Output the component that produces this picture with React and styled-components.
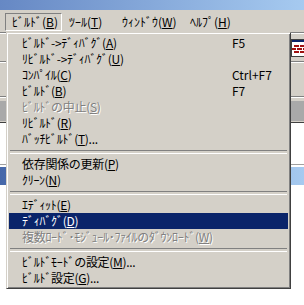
import React from "react";
import styled, { createGlobalStyle, css } from "styled-components";

const Global = createGlobalStyle`
  html, body { margin: 0; padding: 0; background: #fff; }
  * { box-sizing: border-box; }
`;

const FONT = `"Noto Sans CJK JP", "Noto Sans", sans-serif`;

const Screen = styled.div`
  position: relative;
  width: 304px;
  height: 305px;
  overflow: hidden;
  background: #fff;
  font-family: ${FONT};
  font-size: 12px;
  color: #000;
`;

const TitleStrip = styled.div`
  height: 10px;
  background: linear-gradient(90deg, #6688c4 0%, #a6caf0 100%);
`;

const MenuBar = styled.div`
  height: 22px;
  background: #d4d0c8;
  display: flex;
  align-items: flex-start;
  padding: 3px 0 0 5px;
`;

const MenuBarItem = styled.div`
  width: ${(p) => p.$w}px;
  height: 18px;
  padding-left: 6px;
  line-height: 16px;
  white-space: nowrap;
  border: 1px solid transparent;
  ${(p) =>
    p.$pressed &&
    css`
      border-color: #808080 #fff #fff #808080;
    `}
`;

const ToolbarArea = styled.div`
  background: #d4d0c8;
  display: flex;
  flex-direction: column;
`;

const ToolbarRow = styled.div`
  height: ${(p) => p.$h}px;
  display: flex;
  align-items: center;
  justify-content: flex-end;
  border-top: 1px solid #808080;
  box-shadow: inset 0 1px 0 #fff;
`;

const DarkBand = styled.div`
  height: 20px;
  margin-top: 3px;
  width: 100%;
  background: #a9a9a9;
`;

const Workspace = styled.div`
  background: #fff;
  border-top: 1px solid #404040;
  padding-top: 41px;
  height: 200px;
`;

const ChildWindow = styled.div`
  border-top: 1px solid #a0a0a0;
  padding-top: 2px;
`;

const ChildTitle = styled.div`
  height: 18px;
  background: linear-gradient(90deg, #4668aa 0%, #a6caf0 100%);
`;

const Dropdown = styled.div`
  position: absolute;
  left: 6px;
  top: 32px;
  width: 285px;
  background: #d4d0c8;
  border: 1px solid;
  border-color: #d4d0c8 #404040 #404040 #d4d0c8;
  box-shadow: inset 1px 1px 0 #fff, inset -1px -1px 0 #808080;
  padding: 2px;
  display: flex;
  flex-direction: column;
`;

const Item = styled.div`
  height: 16px;
  display: grid;
  grid-template-columns: 210px 1fr;
  padding-left: 13px;
  line-height: 15px;
  white-space: nowrap;
  color: #000;
  ${(p) =>
    p.$active &&
    css`
      background: #0a246a;
      color: #fff;
    `}
  ${(p) =>
    p.$disabled &&
    css`
      color: #808080;
      text-shadow: 1px 1px 0 #fff;
    `}
`;

const Label = styled.span`
  letter-spacing: -0.3px;
`;

const Shortcut = styled.span``;

const Separator = styled.div`
  height: 9px;
  display: flex;
  align-items: center;
  padding: 0 1px;
  &::before {
    content: "";
    flex: 1;
    height: 2px;
    border-top: 1px solid #808080;
    border-bottom: 1px solid #fff;
  }
`;

const BrickIcon = () => (
  <svg width="14" height="20" viewBox="0 0 14 20" style={{ marginRight: -1 }}>
    <rect x="0.5" y="2.5" width="14" height="17" fill="#fff" stroke="#404040" />
    <rect x="1" y="3" width="13" height="2" fill="#0a246a" />
    <g fill="#a01010">
      <rect x="3" y="8" width="5" height="2" />
      <rect x="9" y="8" width="5" height="2" />
      <rect x="1" y="11" width="4" height="2" />
      <rect x="6" y="11" width="5" height="2" />
      <rect x="12" y="11" width="2" height="2" />
      <rect x="3" y="14" width="5" height="2" />
      <rect x="9" y="14" width="5" height="2" />
    </g>
  </svg>
);

const M = ({ children }) => <u>{children}</u>;

const items = [
  { label: <>ﾋﾞﾙﾄﾞ-&gt;ﾃﾞｨﾊﾞｸﾞ(<M>A</M>)</>, key: "F5" },
  { label: <>ﾘﾋﾞﾙﾄﾞ-&gt;ﾃﾞｨﾊﾞｸﾞ(<M>U</M>)</> },
  { label: <>ｺﾝﾊﾟｲﾙ(<M>C</M>)</>, key: "Ctrl+F7" },
  { label: <>ﾋﾞﾙﾄﾞ(<M>B</M>)</>, key: "F7" },
  { label: <>ﾋﾞﾙﾄﾞの中止(<M>S</M>)</>, disabled: true },
  { label: <>ﾘﾋﾞﾙﾄﾞ(<M>R</M>)</> },
  { label: <>ﾊﾞｯﾁﾋﾞﾙﾄﾞ(<M>T</M>)...</> },
  { sep: true },
  { label: <>依存関係の更新(<M>P</M>)</> },
  { label: <>ｸﾘｰﾝ(<M>N</M>)</> },
  { sep: true },
  { label: <>ｴﾃﾞｨｯﾄ(<M>E</M>)</> },
  { label: <>ﾃﾞｨﾊﾞｸﾞ(<M>D</M>)</>, active: true },
  { label: <>複数ﾛｰﾄﾞ･ﾓｼﾞｭｰﾙ･ﾌｧｲﾙのﾀﾞｳﾝﾛｰﾄﾞ(<M>W</M>)</>, disabled: true },
  { sep: true },
  { label: <>ﾋﾞﾙﾄﾞﾓｰﾄﾞの設定(<M>M</M>)...</> },
  { label: <>ﾋﾞﾙﾄﾞ設定(<M>G</M>)...</> },
];

export default function App() {
  return (
    <Screen>
      <Global />
      <TitleStrip />
      <MenuBar>
        <MenuBarItem $w={57} $pressed>
          ﾋﾞﾙﾄﾞ(<M>B</M>)
        </MenuBarItem>
        <MenuBarItem $w={53}>
          ﾂｰﾙ(<M>T</M>)
        </MenuBarItem>
        <MenuBarItem $w={68}>
          ｳｨﾝﾄﾞｳ(<M>W</M>)
        </MenuBarItem>
        <MenuBarItem $w={70}>
          ﾍﾙﾌﾟ(<M>H</M>)
        </MenuBarItem>
      </MenuBar>
      <ToolbarArea>
        <ToolbarRow $h={29}>
          <BrickIcon />
        </ToolbarRow>
        <ToolbarRow $h={35} />
        <ToolbarRow $h={26}>
          <DarkBand />
        </ToolbarRow>
      </ToolbarArea>
      <Workspace>
        <ChildWindow>
          <ChildTitle />
        </ChildWindow>
      </Workspace>
      <Dropdown>
        {items.map((it, i) =>
          it.sep ? (
            <Separator key={i} />
          ) : (
            <Item key={i} $active={it.active} $disabled={it.disabled}>
              <Label>{it.label}</Label>
              <Shortcut>{it.key || ""}</Shortcut>
            </Item>
          )
        )}
      </Dropdown>
    </Screen>
  );
}
